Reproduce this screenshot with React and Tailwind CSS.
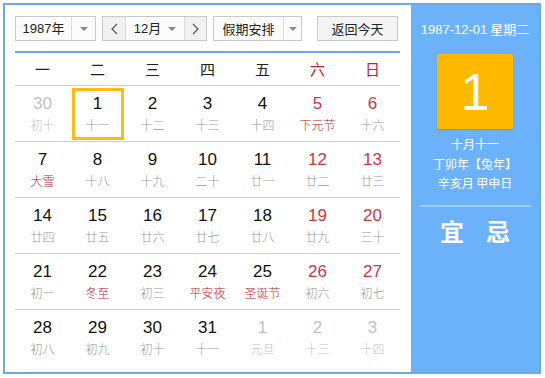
import React from "react";

const weekdays = [
  { t: "一" },
  { t: "二" },
  { t: "三" },
  { t: "四" },
  { t: "五" },
  { t: "六", red: true },
  { t: "日", red: true },
];

// d: day, l: lunar, o: other month, fr: festival red
const rows = [
  [
    { d: 30, l: "初十", o: true },
    { d: 1, l: "十一", sel: true },
    { d: 2, l: "十二" },
    { d: 3, l: "十三" },
    { d: 4, l: "十四" },
    { d: 5, l: "下元节", fr: true },
    { d: 6, l: "十六" },
  ],
  [
    { d: 7, l: "大雪", fr: true },
    { d: 8, l: "十八" },
    { d: 9, l: "十九" },
    { d: 10, l: "二十" },
    { d: 11, l: "廿一" },
    { d: 12, l: "廿二" },
    { d: 13, l: "廿三" },
  ],
  [
    { d: 14, l: "廿四" },
    { d: 15, l: "廿五" },
    { d: 16, l: "廿六" },
    { d: 17, l: "廿七" },
    { d: 18, l: "廿八" },
    { d: 19, l: "廿九" },
    { d: 20, l: "三十" },
  ],
  [
    { d: 21, l: "初一" },
    { d: 22, l: "冬至", fr: true },
    { d: 23, l: "初三" },
    { d: 24, l: "平安夜", fr: true },
    { d: 25, l: "圣诞节", fr: true },
    { d: 26, l: "初六" },
    { d: 27, l: "初七" },
  ],
  [
    { d: 28, l: "初八" },
    { d: 29, l: "初九" },
    { d: 30, l: "初十" },
    { d: 31, l: "十一" },
    { d: 1, l: "元旦", o: true },
    { d: 2, l: "十三", o: true },
    { d: 3, l: "十四", o: true },
  ],
];

const Caret = () => (
  <span className="w-0 h-0 border-l-[4px] border-r-[4px] border-t-[4px] border-l-transparent border-r-transparent border-t-[#8a8a8a]" />
);

const Chevron = ({ left }) => (
  <svg width="7" height="12" viewBox="0 0 7 12" fill="none" stroke="#555" strokeWidth="1.2">
    <path d={left ? "M6 1 L1 6 L6 11" : "M1 1 L6 6 L1 11"} />
  </svg>
);

const Cell = ({ c, col }) => {
  const weekend = col >= 5;
  let numCls = "text-[#111]";
  let lunCls = "text-[#999]";
  if (c.o) {
    numCls = "text-[#c2c2c2]";
    lunCls = "text-[#c2c2c2]";
  } else {
    if (weekend) numCls = "text-[#d23440]";
    if (c.fr) lunCls = "text-[#c4202e]";
  }
  return (
    <div className="flex items-center justify-center h-[55px]">
      <div
        className={
          "flex flex-col items-center justify-center w-[52px] h-[52px] " +
          (c.sel ? "border-[3px] border-[#ffbb11]" : "")
        }
      >
        <span className={"text-[17px] leading-[20px] font-['Liberation_Sans',sans-serif] " + numCls}>
          {c.d}
        </span>
        <span className={"text-[12px] leading-[18px] mt-[2px] font-light " + lunCls}>{c.l}</span>
      </div>
    </div>
  );
};

export default function App() {
  return (
    <div className="w-[545px] h-[378px] bg-white pt-[3px] pl-[3px] font-['Noto_Sans_CJK_SC','Liberation_Sans',sans-serif]">
      <div className="flex w-[538px] h-[371px] border-2 border-[#6aaae8]">
        {/* left: calendar */}
        <div className="w-[406px] bg-white pt-[11px] pl-[10px] pr-[11px]">
          <div className="flex items-center h-[25px] gap-[6px] text-[13px] text-[#222]">
            <div className="flex h-[25px] w-[81px] border border-[#c9c9c9] bg-[#fbfbfb]">
              <span className="flex-1 flex items-center justify-center font-['Liberation_Sans','Noto_Sans_CJK_SC',sans-serif]">
                1987年
              </span>
              <span className="w-[24px] flex items-center justify-center border-l border-[#dcdcdc]">
                <Caret />
              </span>
            </div>
            <div className="flex h-[25px] w-[105px] border border-[#c9c9c9] bg-[#fbfbfb]">
              <span className="w-[23px] flex items-center justify-center border-r border-[#dcdcdc] bg-[#f1f1f1]">
                <Chevron left />
              </span>
              <span className="flex-1 flex items-center justify-center gap-[7px] font-['Liberation_Sans','Noto_Sans_CJK_SC',sans-serif]">
                12月 <Caret />
              </span>
              <span className="w-[22px] flex items-center justify-center border-l border-[#dcdcdc] bg-[#f1f1f1]">
                <Chevron />
              </span>
            </div>
            <div className="flex h-[25px] w-[89px] border border-[#c9c9c9] bg-[#fbfbfb]">
              <span className="flex-1 flex items-center justify-center">假期安排</span>
              <span className="w-[18px] flex items-center justify-center border-l border-[#dcdcdc]">
                <Caret />
              </span>
            </div>
            <div className="ml-[9px] flex h-[25px] w-[81px] items-center justify-center border border-[#c9c9c9] bg-[#f4f4f4]">
              返回今天
            </div>
          </div>

          <div className="mt-[10px] h-[2px] bg-[#6aaae8]" />

          <div className="grid grid-cols-7 h-[33px] border-b border-[#cfcfcf]">
            {weekdays.map((w) => (
              <div
                key={w.t}
                className={
                  "flex items-center justify-center text-[15px] " +
                  (w.red ? "text-[#c4202e]" : "text-[#222]")
                }
              >
                {w.t}
              </div>
            ))}
          </div>

          {rows.map((r, i) => (
            <div
              key={i}
              className={
                "grid grid-cols-7 " + (i < rows.length - 1 ? "border-b border-[#cfcfcf]" : "")
              }
            >
              {r.map((c, j) => (
                <Cell key={j} c={c} col={j} />
              ))}
            </div>
          ))}
        </div>

        {/* right: detail */}
        <div className="flex-1 bg-[#6cb2fb] flex flex-col items-center text-white">
          <div className="mt-[14px] text-[13px] leading-[20px]">
            <span className="font-['Liberation_Sans',sans-serif]">1987-12-01</span> 星期二
          </div>
          <div className="mt-[14px] w-[76px] h-[75px] bg-[#ffb900] rounded-[2px] flex items-center justify-center text-[52px] font-['Liberation_Sans',sans-serif] shadow-[0_1px_2px_rgba(0,0,0,0.15)]">
            1
          </div>
          <div className="mt-[5px] flex flex-col items-center text-[12px] leading-[19.5px]">
            <span>十月十一</span>
            <span>丁卯年【兔年】</span>
            <span>辛亥月 甲申日</span>
          </div>
          <div className="mt-[12px] w-[111px] h-[2px] bg-[#9ccafa]" />
          <div className="mt-[9px] flex gap-[22px] text-[24px] font-bold leading-[30px]">
            <span>宜</span>
            <span>忌</span>
          </div>
        </div>
      </div>
    </div>
  );
}
